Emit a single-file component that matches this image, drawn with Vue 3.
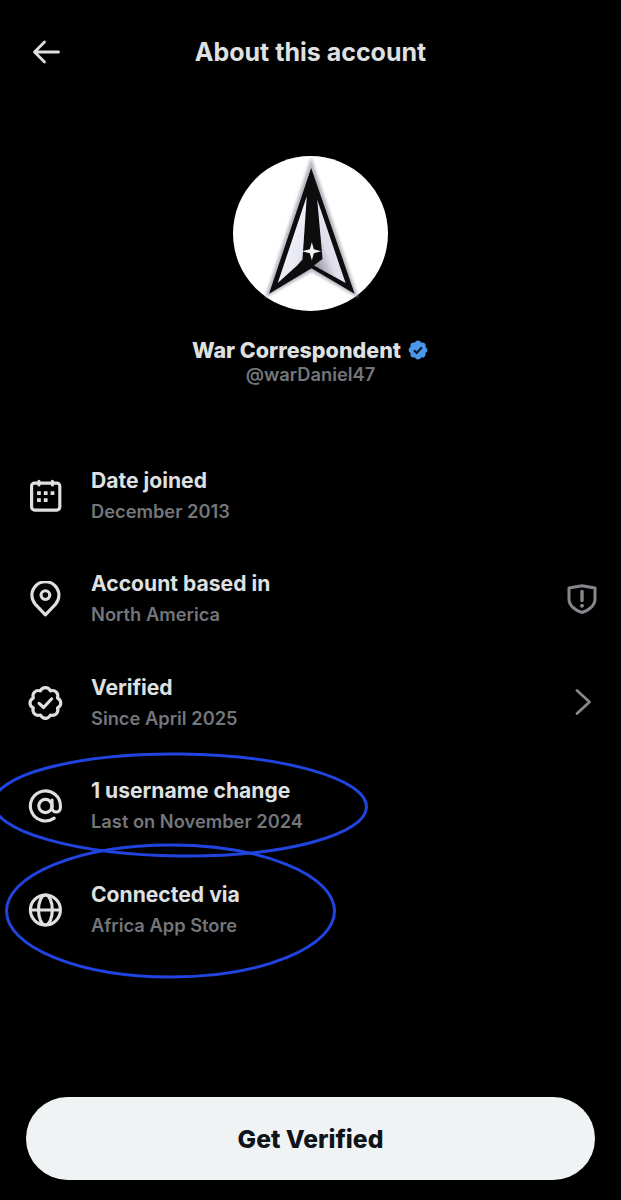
<template>
  <div class="screen">
    <header class="topbar">
      <svg class="back" viewBox="0 0 28 24" fill="none" stroke="currentColor" stroke-width="2.8" stroke-linecap="round" stroke-linejoin="round">
        <path d="M26.5 12H2.5M12.5 2 2.5 12l10 10" />
      </svg>
      <h1>About this account</h1>
    </header>

    <section class="profile">
      <svg class="avatar" viewBox="160 48 464 464">
        <defs>
          <linearGradient id="panelL" x1="0" y1="0" x2="1" y2="1">
            <stop offset="0" stop-color="#fdfdff" />
            <stop offset="0.72" stop-color="#e8e8f4" />
            <stop offset="1" stop-color="#8f8f9a" />
          </linearGradient>
          <linearGradient id="panelR" x1="1" y1="0" x2="0" y2="1">
            <stop offset="0" stop-color="#f2f2f9" />
            <stop offset="0.6" stop-color="#dfdfec" />
            <stop offset="1" stop-color="#6e6e76" />
          </linearGradient>
          <filter id="halo"><feGaussianBlur stdDeviation="4" /></filter>
          <filter id="soft"><feGaussianBlur stdDeviation="1.6" /></filter>
        </defs>
        <circle cx="392" cy="280" r="232" fill="#fff" />
        <path d="M394 52 256 472 395 394 535 472Z" fill="#b4b4be" filter="url(#halo)" />
        <g filter="url(#soft)">
          <path d="M394 84 268 460 395 384 524 460Z" fill="#08080a" />
          <path d="M381 168 294 428 352 376 368 358Z" fill="url(#panelL)" />
          <path d="M412 178 497 428 402 376 428 356Z" fill="url(#panelR)" />
        </g>
        <path d="M396 306 402 327 424 333 402 339 396 360 390 339 366 333 390 327Z" fill="#f4f4f6" />
      </svg>
      <div class="name-line">
        <span class="name">War Correspondent</span>
        <svg class="badge" viewBox="0 0 24 24">
          <path fill="#4a99e9" d="M22.25 12c0-1.43-.88-2.67-2.19-3.34.46-1.39.2-2.9-.81-3.91s-2.52-1.27-3.91-.81c-.66-1.31-1.91-2.19-3.34-2.19s-2.67.88-3.33 2.19c-1.4-.46-2.91-.2-3.92.81s-1.26 2.52-.8 3.91c-1.31.67-2.2 1.91-2.2 3.34s.89 2.67 2.2 3.34c-.46 1.39-.21 2.9.8 3.91s2.52 1.26 3.91.81c.67 1.31 1.91 2.19 3.34 2.19s2.68-.88 3.34-2.19c1.39.45 2.9.2 3.91-.81s1.27-2.52.81-3.91c1.31-.67 2.19-1.91 2.19-3.34z" />
          <path d="M7.6 12.3l3 2.9 5.7-6.1" fill="none" stroke="#0b1a2b" stroke-width="2.4" />
        </svg>
      </div>
      <div class="handle">@warDaniel47</div>
    </section>

    <ul class="rows">
      <li v-for="row in rows" :key="row.title" class="row">
        <svg class="icon" viewBox="0 0 24 24" fill="none" stroke="currentColor" stroke-width="2.1" stroke-linecap="round" stroke-linejoin="round">
          <template v-if="row.icon === 'calendar'">
            <rect x="2.4" y="3.4" width="18.8" height="18" rx="2" />
            <path d="M7.3 2.2v2.4M16.3 2.2v2.4" />
            <path d="M7.3 10h.01M11.8 10h.01M16.3 10h.01M7.3 14.7h.01M11.8 14.7h.01" stroke-width="2.5" stroke-linecap="square" />
          </template>
          <template v-else-if="row.icon === 'pin'">
            <path d="M11.6 22.6 4.8 15.4A9 9 0 1 1 18.4 15.4Z" />
            <circle cx="11.6" cy="9.4" r="2.9" />
          </template>
          <template v-else-if="row.icon === 'verified'">
            <path transform="translate(-.4 0)" d="M22.25 12c0-1.43-.88-2.67-2.19-3.34.46-1.39.2-2.9-.81-3.91s-2.52-1.27-3.91-.81c-.66-1.31-1.91-2.19-3.34-2.19s-2.67.88-3.33 2.19c-1.4-.46-2.91-.2-3.92.81s-1.26 2.52-.8 3.91c-1.31.67-2.2 1.91-2.2 3.34s.89 2.67 2.2 3.34c-.46 1.39-.21 2.9.8 3.91s2.52 1.26 3.91.81c.67 1.31 1.91 2.19 3.34 2.19s2.68-.88 3.34-2.19c1.39.45 2.9.2 3.91-.81s1.27-2.52.81-3.91c1.31-.67 2.19-1.91 2.19-3.34z" />
            <path d="M7.4 12.2l3 2.8 5.4-5.8" />
          </template>
          <template v-else-if="row.icon === 'at'">
            <circle cx="11.6" cy="12" r="4.4" />
            <path d="M16 8v5.2a2.8 2.8 0 0 0 5.6 0V12a10 10 0 1 0-4.2 8.1" />
          </template>
          <template v-else>
            <circle cx="11.6" cy="12" r="10" />
            <ellipse cx="11.6" cy="12" rx="4.6" ry="10" />
            <path d="M2 12h19.2" />
          </template>
        </svg>
        <div class="text">
          <div class="title">{{ row.title }}</div>
          <div class="sub">{{ row.sub }}</div>
        </div>
        <svg v-if="row.trail === 'shield'" class="trail shield" viewBox="0 0 30 30" fill="none" stroke="currentColor" stroke-width="3" stroke-linecap="round" stroke-linejoin="round">
          <path d="M2 4 15 1.8 28 4V15C28 21.5 22 26.5 15 28.5 8 26.5 2 21.5 2 15Z" />
          <path d="M15 7.5v9" stroke-width="3.4" />
          <circle cx="15" cy="21.8" r="1.5" fill="currentColor" stroke-width="1" />
        </svg>
        <svg v-else-if="row.trail === 'chevron'" class="trail chevron" viewBox="0 0 16 26" fill="none" stroke="currentColor" stroke-width="2.8" stroke-linecap="round" stroke-linejoin="round">
          <path d="M2 1.5 14.5 13 2 24.5" />
        </svg>
      </li>
    </ul>

    <button class="cta">Get Verified</button>

    <svg class="marks" viewBox="0 0 621 1200" fill="none" stroke="#2144e0" stroke-width="3">
      <ellipse cx="180" cy="805" rx="186.5" ry="51" transform="rotate(0.6 180 805)" />
      <ellipse cx="170.5" cy="911" rx="164" ry="66" />
    </svg>
  </div>
</template>

<script setup>
const rows = [
  { icon: 'calendar', title: 'Date joined', sub: 'December 2013' },
  { icon: 'pin', title: 'Account based in', sub: 'North America', trail: 'shield' },
  { icon: 'verified', title: 'Verified', sub: 'Since April 2025', trail: 'chevron' },
  { icon: 'at', title: '1 username change', sub: 'Last on November 2024' },
  { icon: 'globe', title: 'Connected via', sub: 'Africa App Store' },
]
</script>

<style>
html, body {
  margin: 0;
  background: #000;
}
</style>

<style scoped>
.screen {
  position: relative;
  width: 621px;
  height: 1200px;
  overflow: hidden;
  background: #000;
  color: #dfe0e1;
  font-family: Inter, "Liberation Sans", sans-serif;
  display: flex;
  flex-direction: column;
}
.topbar {
  position: relative;
  height: 104px;
  display: flex;
  align-items: center;
  justify-content: center;
}
.topbar h1 {
  margin: 0;
  font-size: 25px;
  font-weight: 700;
}
.back {
  position: absolute;
  left: 32px;
  top: 40px;
  width: 28px;
  height: 24px;
}
.profile {
  display: flex;
  flex-direction: column;
  align-items: center;
  padding-top: 52px;
}
.avatar {
  width: 155px;
  height: 155px;
}
.name-line {
  display: flex;
  align-items: center;
  gap: 6px;
  margin-top: 24px;
  height: 30px;
}
.name {
  font-size: 21.5px;
  font-weight: 800;
}
.badge {
  width: 22px;
  height: 22px;
}
.handle {
  font-size: 18.3px;
  line-height: 22px;
  margin-top: -2px;
  font-weight: 600;
  color: #73767b;
}
.rows {
  list-style: none;
  margin: 0;
  padding: 0;
  margin-top: 59px;
}
.row {
  height: 103.5px;
  display: flex;
  align-items: center;
  padding: 0 24px 0 28px;
}
.icon {
  width: 36px;
  height: 36px;
  flex: none;
  margin-right: 27px;
}
.text {
  flex: 1;
}
.title {
  font-size: 21.1px;
  line-height: 30px;
  font-weight: 700;
}
.sub {
  font-size: 18.3px;
  line-height: 30px;
  font-weight: 600;
  color: #73767b;
}
.trail {
  flex: none;
  color: #84878b;
}
.shield {
  width: 30px;
  height: 30px;
}
.chevron {
  width: 16px;
  height: 26px;
  margin-right: 6px;
  margin-top: -2px;
}
.cta {
  position: absolute;
  left: 26px;
  right: 26px;
  bottom: 20px;
  height: 83px;
  border: none;
  border-radius: 42px;
  background: #eff3f4;
  color: #0f1419;
  font-family: inherit;
  font-size: 24.7px;
  font-weight: 800;
}
.marks {
  position: absolute;
  inset: 0;
  width: 621px;
  height: 1200px;
  pointer-events: none;
}
</style>
